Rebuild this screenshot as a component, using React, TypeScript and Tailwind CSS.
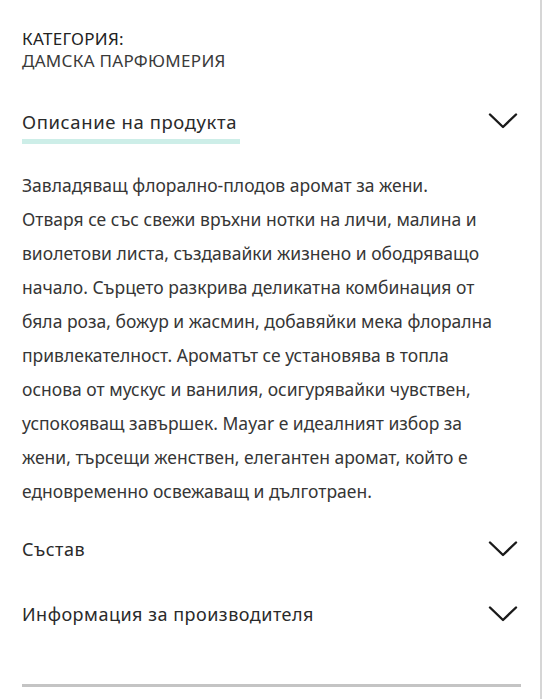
import React from "react";

const Chevron = () => (
  <svg width="30" height="18" viewBox="0 0 30 18" fill="none" className="shrink-0">
    <path d="M2 2.5 L15 15 L28 2.5" stroke="#1a1a1a" strokeWidth="2.4" strokeLinecap="round" strokeLinejoin="round" />
  </svg>
);

const lines = [
  "Завладяващ флорално-плодов аромат за жени.",
  "Отваря се със свежи връхни нотки на личи, малина и",
  "виолетови листа, създавайки жизнено и ободряващо",
  "начало. Сърцето разкрива деликатна комбинация от",
  "бяла роза, божур и жасмин, добавяйки мека флорална",
  "привлекателност. Ароматът се установява в топла",
  "основа от мускус и ванилия, осигурявайки чувствен,",
  "успокояващ завършек. Mayar е идеалният избор за",
  "жени, търсещи женствен, елегантен аромат, който е",
  "едновременно освежаващ и дълготраен.",
];

export default function App() {
  return (
    <div
      className="w-[542px] h-[699px] bg-white border-r-2 border-[#d6d6d6] overflow-hidden text-[#2e2e2e]"
      style={{ fontFamily: '"Noto Sans", sans-serif' }}
    >
      <div className="pl-[22px] pr-[22px] pt-[28px]">
        <div className="text-[17px] leading-[22px] tracking-[0.3px]">
          <div className="text-[#222]">КАТЕГОРИЯ:</div>
          <div className="text-[#3a3a3a]">ДАМСКА ПАРФЮМЕРИЯ</div>
        </div>

        <div className="mt-[37px] flex items-start justify-between">
          <div className="flex flex-col items-start">
            <span className="text-[18.5px] leading-[26px] tracking-[0.6px] text-[#2a2a2a]">Описание на продукта</span>
            <span className="mt-[4px] h-[5px] w-[218px] bg-[#cdeee8]" />
          </div>
          <div className="pt-[3px]">
            <Chevron />
          </div>
        </div>

        <div className="mt-[24px] text-[17.5px] leading-[34px] text-[#363636]">
          {lines.map((l, i) => (
            <div key={i} className="whitespace-nowrap">{l}</div>
          ))}
        </div>

        <div className="mt-[28px] flex items-center justify-between">
          <span className="text-[18px] leading-[26px] tracking-[0.5px] text-[#2a2a2a]">Състав</span>
          <Chevron />
        </div>

        <div className="mt-[39px] flex items-center justify-between">
          <span className="text-[18px] leading-[26px] tracking-[0.5px] text-[#2a2a2a]">Информация за производителя</span>
          <Chevron />
        </div>

        <div className="mt-[57px] h-[3px] w-[499px] bg-[#c4c4c4]" />
      </div>
    </div>
  );
}
